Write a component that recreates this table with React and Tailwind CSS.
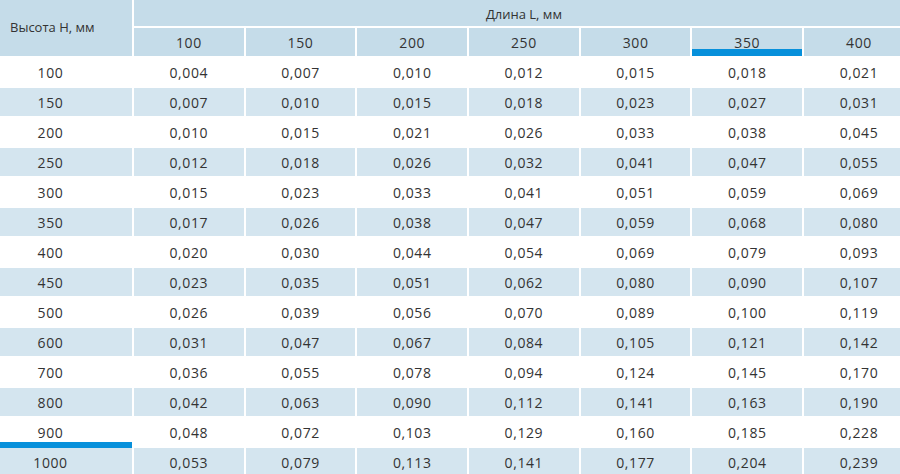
import React from "react";

const cols = ["100", "150", "200", "250", "300", "350", "400"];
const rows = [
  ["100", "0,004", "0,007", "0,010", "0,012", "0,015", "0,018", "0,021"],
  ["150", "0,007", "0,010", "0,015", "0,018", "0,023", "0,027", "0,031"],
  ["200", "0,010", "0,015", "0,021", "0,026", "0,033", "0,038", "0,045"],
  ["250", "0,012", "0,018", "0,026", "0,032", "0,041", "0,047", "0,055"],
  ["300", "0,015", "0,023", "0,033", "0,041", "0,051", "0,059", "0,069"],
  ["350", "0,017", "0,026", "0,038", "0,047", "0,059", "0,068", "0,080"],
  ["400", "0,020", "0,030", "0,044", "0,054", "0,069", "0,079", "0,093"],
  ["450", "0,023", "0,035", "0,051", "0,062", "0,080", "0,090", "0,107"],
  ["500", "0,026", "0,039", "0,056", "0,070", "0,089", "0,100", "0,119"],
  ["600", "0,031", "0,047", "0,067", "0,084", "0,105", "0,121", "0,142"],
  ["700", "0,036", "0,055", "0,078", "0,094", "0,124", "0,145", "0,170"],
  ["800", "0,042", "0,063", "0,090", "0,112", "0,141", "0,163", "0,190"],
  ["900", "0,048", "0,072", "0,103", "0,129", "0,160", "0,185", "0,228"],
  ["1000", "0,053", "0,079", "0,113", "0,141", "0,177", "0,204", "0,239"],
];

export default function App() {
  return (
    <div className="w-[900px] h-[474px] overflow-hidden bg-white font-['Open_Sans',sans-serif] text-[#333333]">
      <div className="grid w-[912px] grid-cols-[132px_repeat(7,109.7px)] grid-rows-[26px_28px_repeat(14,28px)] gap-[2px]">
        <div className="row-span-2 flex items-center bg-[#c5dce9] pl-[10px] text-[13px]">
          Высота Н, мм
        </div>
        <div className="col-span-7 flex items-center justify-center bg-[#c5dce9] pt-[4px] text-[13px]">
          Длина L, мм
        </div>
        {cols.map((c, i) => (
          <div
            key={c}
            className="relative flex items-center justify-center bg-[#c5dce9] text-[14px] tracking-[0.6px]"
          >
            {c}
            {i === 5 && (
              <div className="absolute bottom-0 left-0 right-0 h-[7px] bg-[#0790db]" />
            )}
          </div>
        ))}
        {rows.map((r, ri) => {
          const bg = ri % 2 === 1 ? "bg-[#d4e5ef]" : "bg-white";
          return r.map((v, ci) => (
            <div
              key={ri + "-" + ci}
              className={
                "relative flex items-center justify-center text-[14px] tracking-[0.6px] " +
                bg +
                (ci === 0 ? " pr-[31px]" : "")
              }
            >
              {v}
              {ci === 0 && ri === 12 && (
                <div className="absolute bottom-[-2px] left-0 right-0 h-[6px] bg-[#0790db]" />
              )}
            </div>
          ));
        })}
      </div>
    </div>
  );
}
